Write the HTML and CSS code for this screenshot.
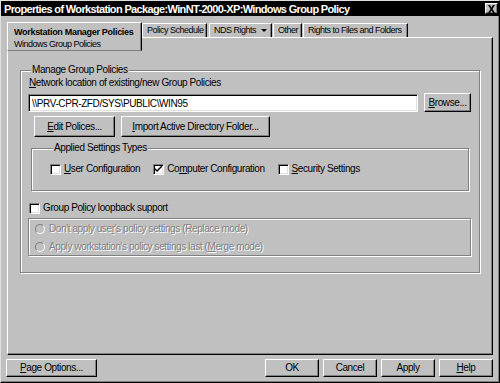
FILE: index.html
```html
<!DOCTYPE html>
<html>
<head>
<meta charset="utf-8">
<link rel="stylesheet" href="styles.css">
</head>
<body>
<div class="window">
  <div class="titlebar">
    <span class="title">Properties of Workstation Package:WinNT-2000-XP:Windows Group Policy</span>
    <span class="close"><svg width="9" height="8" viewBox="0 0 9 8"><path d="M1 0h2l1.5 2.5L6 0h2L5.5 4 8 8H6L4.5 5.5 3 8H1l2.5-4z" fill="#000"/></svg></span>
  </div>
  <div class="client">
    <div class="tabs">
      <div class="tab tab-active">
        <div class="tab-main">Workstation Manager Policies</div>
        <div class="tab-sub">Windows Group Policies</div>
      </div>
      <div class="tab tab-schedule">Policy Schedule</div>
      <div class="tab tab-nds">NDS Rights <span class="arrow"></span></div>
      <div class="tab tab-other">Other</div>
      <div class="tab tab-rights">Rights to Files and Folders</div>
    </div>
    <div class="panel">
      <fieldset class="group group-main">
        <legend>Manage Group Policies</legend>
        <div class="field-label"><u>N</u>etwork location of existing/new Group Policies</div>
        <div class="row row-path">
          <div class="textbox">\\PRV-CPR-ZFD/SYS\PUBLIC\WIN95</div>
          <div class="btn btn-browse"><u>B</u>rowse...</div>
        </div>
        <div class="row row-actions">
          <div class="btn btn-edit"><u>E</u>dit Polices...</div>
          <div class="btn btn-import"><u>I</u>mport Active Directory Folder...</div>
        </div>
        <fieldset class="group group-types">
          <legend>Applied Settings Types</legend>
          <div class="checks">
            <div class="check"><span class="box"></span><span><u>U</u>ser Configuration</span></div>
            <div class="check"><span class="box"><svg width="7" height="7" viewBox="0 0 7 7"><path d="M0 2v2l2 2 5-5V-1L2 4z" fill="#000"/></svg></span><span>Co<u>m</u>puter Configuration</span></div>
            <div class="check"><span class="box"></span><span><u>S</u>ecurity Settings</span></div>
          </div>
        </fieldset>
        <div class="check check-loopback"><span class="box"></span><span>Group Po<u>l</u>icy loopback support</span></div>
        <div class="subbox">
          <div class="radio"><span class="dot"></span><span class="disabled">Don't apply use<u>r</u>'s policy settings (Replace mode)</span></div>
          <div class="radio"><span class="dot"></span><span class="disabled">Apply workstation's policy settings last (<u>M</u>erge mode)</span></div>
        </div>
      </fieldset>
    </div>
    <div class="footer">
      <div class="btn btn-foot btn-page"><u>P</u>age Options...</div>
      <div class="foot-right">
        <div class="btn btn-foot">OK</div>
        <div class="btn btn-foot">Cancel</div>
        <div class="btn btn-foot">Apply</div>
        <div class="btn btn-foot"><u>H</u>elp</div>
      </div>
    </div>
  </div>
</div>
</body>
</html>
```

FILE: styles.css
```css
html, body {
  margin: 0;
  padding: 0;
  background: #c0c0c0;
}

body {
  font-family: "Liberation Sans", Arial, sans-serif;
  font-size: 10px;
  letter-spacing: -0.4px;
  color: #000;
}

.window {
  width: 500px;
  height: 383px;
  box-sizing: border-box;
  border: 1px solid;
  border-color: #dfdfdf #000 #000 #dfdfdf;
  box-shadow: inset -1px -1px 0 #808080;
  background: #c0c0c0;
  display: flex;
  flex-direction: column;
}

.titlebar {
  height: 15px;
  flex: none;
  background: #000;
  color: #fff;
  display: flex;
  align-items: center;
  justify-content: space-between;
  padding: 0 1px 0 3px;
}

.title {
  font-weight: bold;
  font-size: 11px;
  letter-spacing: -0.65px;
}

.close {
  width: 13px;
  height: 11px;
  box-sizing: border-box;
  background: #c0c0c0;
  border: 1px solid;
  border-color: #fff #000 #000 #fff;
  box-shadow: inset -1px -1px 0 #808080;
  display: flex;
  align-items: center;
  justify-content: center;
}

.client {
  flex: 1;
  display: flex;
  flex-direction: column;
  padding: 6px 6px 0 6px;
}

/* tabs */
.tabs {
  height: 15px;
  flex: none;
  display: flex;
  align-items: flex-start;
  position: relative;
  z-index: 1;
  font-size: 9px;
  letter-spacing: -0.5px;
}

.tab {
  box-sizing: border-box;
  height: 14px;
  margin-top: 1px;
  padding: 0 0 0 4px;
  line-height: 13px;
  border-top: 1px solid #fff;
  border-left: 1px solid #fff;
  border-right: 1px solid #000;
  box-shadow: inset -1px 0 0 #808080;
  white-space: nowrap;
  overflow: hidden;
}

.tab-active {
  height: 29px;
  margin-top: 0;
  width: 135px;
  padding: 3px 0 0 6px;
  background: #c0c0c0;
  border-bottom: 1px solid #808080;
  line-height: 12px;
  overflow: visible;
}

.tab-main {
  font-weight: bold;
  letter-spacing: -0.3px;
}

.tab-sub {
  margin-top: 0;
}

.tab-schedule { width: 65px; margin-right: 2px; }
.tab-nds { width: 63px; margin-right: 1px; }
.tab-other { width: 29px; margin-right: 1px; }
.tab-rights { width: 105px; }

.arrow {
  display: inline-block;
  width: 0;
  height: 0;
  border-left: 3px solid transparent;
  border-right: 3px solid transparent;
  border-top: 3px solid #000;
  vertical-align: middle;
  margin-left: 3px;
}

/* panel */
.panel {
  height: 318px;
  flex: none;
  box-sizing: border-box;
  border: 1px solid;
  border-color: #fff #000 #000 #fff;
  box-shadow: inset -1px -1px 0 #808080;
  padding: 26px 0 0 12px;
}

.group {
  margin: 0;
  border: 1px solid #808080;
  box-shadow: 1px 1px 0 #fff, inset 1px 1px 0 #fff;
  box-sizing: border-box;
}

.group legend {
  padding: 0 1px;
  margin-left: 3px;
  line-height: 12px;
  background: #c0c0c0;
}

.group-main {
  width: 460px;
  height: 209px;
  padding: 1px 8px 0 7px;
}

.field-label {
  line-height: 12px;
  margin-left: 1px;
}

.row {
  display: flex;
  align-items: center;
}

.row-path {
  margin-top: 4px;
}

.textbox {
  box-sizing: border-box;
  width: 390px;
  height: 18px;
  background: #fff;
  border: 1px solid;
  border-color: #808080 #fff #fff #808080;
  box-shadow: inset 1px 1px 0 #000, inset -1px -1px 0 #dfdfdf;
  padding: 3px 0 0 3px;
  line-height: 12px;
}

.btn {
  box-sizing: border-box;
  background: #c0c0c0;
  border: 1px solid;
  border-color: #fff #000 #000 #fff;
  box-shadow: inset -1px -1px 0 #808080;
  display: flex;
  align-items: center;
  justify-content: center;
  white-space: nowrap;
  line-height: 12px;
}

.btn-browse {
  width: 47px;
  height: 19px;
  margin-left: 6px;
}

.row-actions {
  margin-top: 4px;
  margin-left: 6px;
}

.btn-edit {
  width: 81px;
  height: 21px;
}

.btn-import {
  width: 149px;
  height: 21px;
  margin-left: 6px;
}

.group-types {
  width: 438px;
  height: 49px;
  margin: 5px 0 0 3px;
  padding: 0 0 0 18px;
}

.checks {
  display: flex;
  margin-top: 9px;
  gap: 13px;
}

.check {
  display: flex;
  align-items: center;
  line-height: 12px;
  white-space: nowrap;
}

.box {
  box-sizing: border-box;
  width: 11px;
  height: 11px;
  background: #fff;
  border: 1px solid;
  border-color: #808080 #fff #fff #808080;
  box-shadow: inset 1px 1px 0 #000, inset -1px -1px 0 #dfdfdf;
  margin-right: 3px;
  display: flex;
  align-items: center;
  justify-content: center;
  flex: none;
}

.check-loopback {
  margin-top: 11px;
  margin-left: 1px;
}

.subbox {
  box-sizing: border-box;
  width: 443px;
  height: 38px;
  margin-top: 4px;
  border: 1px solid #808080;
  box-shadow: 1px 1px 0 #fff, inset 1px 1px 0 #fff;
  padding: 4px 0 0 6px;
}

.radio {
  display: flex;
  align-items: center;
  height: 12px;
  line-height: 12px;
  margin-bottom: 6px;
  white-space: nowrap;
}

.dot {
  box-sizing: border-box;
  width: 10px;
  height: 10px;
  border-radius: 50%;
  border: 1px solid;
  border-color: #808080 #fff #fff #808080;
  background: #c0c0c0;
  margin-right: 4px;
  flex: none;
}

.disabled {
  color: #808080;
  text-shadow: 1px 1px 0 #fff;
}

/* footer */
.footer {
  display: flex;
  justify-content: space-between;
  margin-top: 4px;
  margin-left: -1px;
}

.foot-right {
  display: flex;
  gap: 4px;
}

.btn-foot {
  width: 54px;
  height: 18px;
}

.btn-page {
  width: 91px;
}
```
